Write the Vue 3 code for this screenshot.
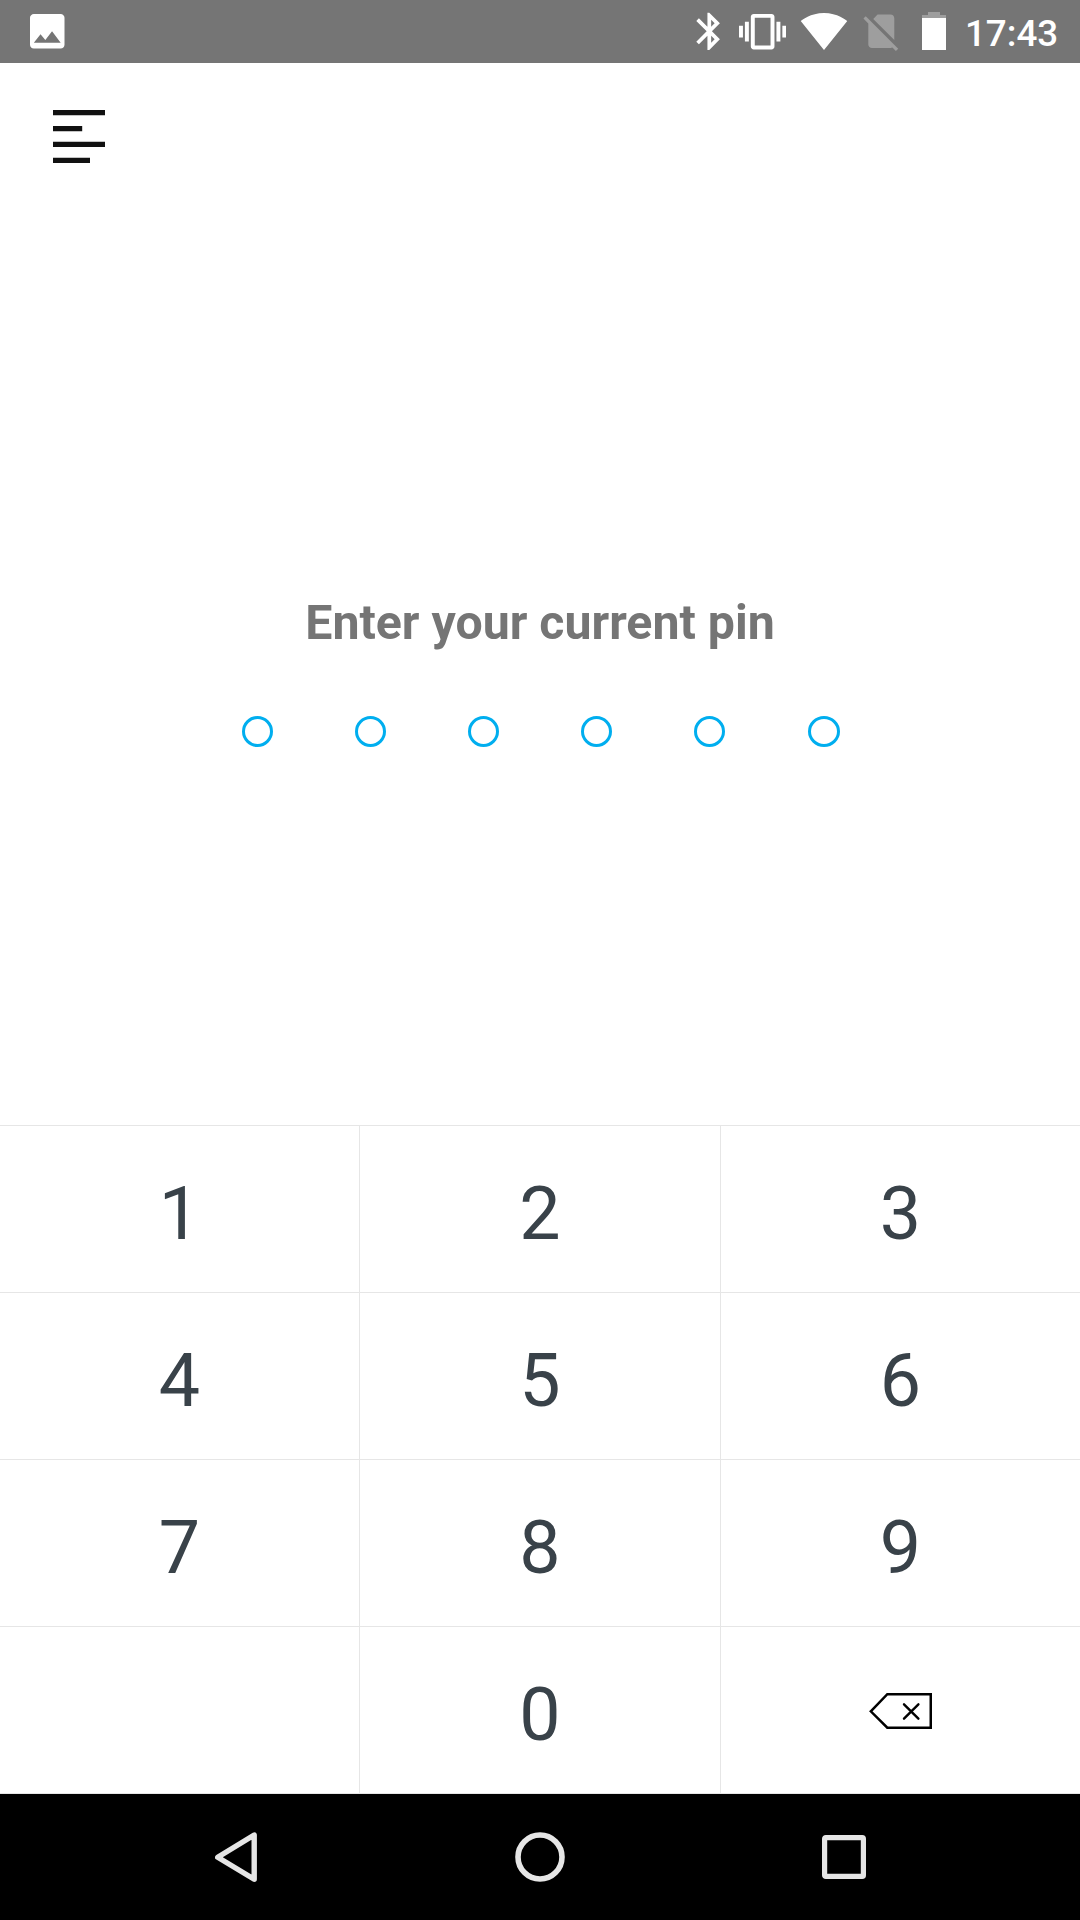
<script setup>
const pinLength = 6
const keys = ['1', '2', '3', '4', '5', '6', '7', '8', '9', '', '0', 'back']
</script>

<template>
  <div class="screen">
    <header class="status">
      <svg class="photo" viewBox="3 3 18 18"><path d="M21 19V5c0-1.100-.9-2-2-2H5c-1.100 0-2 .9-2 2v14c0 1.100.9 2 2 2h14c1.100 0 2-.9 2-2zM8.500 13.500l2.500 3.010L14.500 12l4.500 6H5l3.500-4.500z" /></svg>
      <svg class="bluetooth" viewBox="0 0 24 24"><path d="M17.710 7.710L12 2h-1v7.590L6.410 5 5 6.410 10.590 12 5 17.590 6.410 19 11 14.410V22h1l5.710-5.710-4.300-4.290 4.300-4.290zM13 5.830l1.880 1.880L13 9.590V5.830zm1.880 10.460L13 18.170v-3.760l1.880 1.880z" /></svg>
      <svg class="vibrate" viewBox="0 0 24 24"><path d="M0 15h2V9H0v6zm3 2h2V7H3v10zm19-8v6h2V9h-2zm-3 8h2V7h-2v10zM16.500 3h-9C6.670 3 6 3.670 6 4.500v15c0 .83.67 1.500 1.500 1.500h9c.83 0 1.500-.67 1.500-1.500v-15c0-.83-.67-1.500-1.500-1.500zM16 19H8V5h8v14z" /></svg>
      <svg class="wifi" viewBox="0 0 24 24"><path d="M12.010 21.490L23.640 7c-.45-.34-4.930-4-11.640-4C5.280 3 .81 6.660.36 7l11.630 14.490.01.01.01-.01z" /></svg>
      <svg class="no-sim" viewBox="0 0 24 24"><path d="M18.990 5c0-1.100-.89-2-1.990-2h-7L7.660 5.340 19 16.680 18.990 5zM3.650 3.880L2.380 5.150 5 7.770V19c0 1.100.9 2 2 2h10.010c.35 0 .67-.1.96-.26l1.880 1.880 1.270-1.270L3.650 3.880z" /></svg>
      <svg class="battery" viewBox="0 0 24 38"><path d="M6 0h12v3h6v3H0V3h6z" fill="#9e9e9e" /><path d="M0 6h24v32H0z" /></svg>
      <span class="clock">17:43</span>
    </header>

    <button class="menu" aria-label="Menu">
      <svg width="52" height="53" viewBox="0 0 52 53"><path d="M0 0h52v5.300H0zM0 16h29.200v5.300H0zM0 31.700h52V37H0zM0 47.700h37V53H0z" /></svg>
    </button>

    <main class="prompt">
      <h1>Enter your current pin</h1>
      <div class="dots">
        <i v-for="n in pinLength" :key="n" class="dot"></i>
      </div>
    </main>

    <section class="keypad">
      <div v-for="(key, i) in keys" :key="i" class="key">
        <svg v-if="key === 'back'" class="backspace" width="63" height="36" viewBox="0 0 63 36">
          <path d="M1.800 18.300L18.300 1.250H61.750V34.750H18.300Z" stroke-width="2.5" />
          <path d="M35 11.300l14.400 14.400M49.400 11.300L35 25.700" stroke-width="2.4" stroke-linecap="round" />
        </svg>
        <span v-else>{{ key }}</span>
      </div>
    </section>

    <nav class="navbar">
      <svg width="42" height="50" viewBox="0 0 42 50"><path d="M2.700 25.300L39.200 3V47.300Z" stroke-width="5.400" stroke-linejoin="round" /></svg>
      <svg width="50" height="50" viewBox="0 0 50 50"><circle cx="25" cy="25" r="22" stroke-width="5.600" /></svg>
      <svg width="44" height="44" viewBox="0 0 44 44"><rect x="2.600" y="2.600" width="38.800" height="38.800" rx="1.200" stroke-width="5.200" /></svg>
    </nav>
  </div>
</template>

<style>
body { margin: 0; background: #fff; }
</style>

<style scoped>
.screen {
  width: 1080px;
  height: 1920px;
  display: flex;
  flex-direction: column;
  overflow: hidden;
  background: #fff;
  font-family: Roboto, "Liberation Sans", sans-serif;
}
svg { display: block; flex: none; }
.status {
  height: 63px;
  flex: none;
  display: flex;
  align-items: center;
  box-sizing: border-box;
  padding-bottom: 1px;
  background: #757575;
  color: #fff;
}
.status svg { fill: #fff; }
.photo { width: 34.500px; height: 34.500px; margin: 1px 0 0 30.400px; }
.bluetooth { width: 44.600px; height: 44.600px; margin: 1px 0 0 622.300px; }
.vibrate { width: 47.300px; height: 47.300px; margin: 1.500px 0 0 7px; }
.wifi { width: 48px; height: 48px; margin-left: 14px; }
.status .no-sim { width: 44.600px; height: 44.600px; margin-left: 11.300px; fill: #9e9e9e; }
.battery { width: 24px; height: 38px; margin-left: 17.800px; }
.clock {
  margin-left: 19.200px;
  padding-top: 6px;
  font-size: 36.750px;
  line-height: 44px;
  font-weight: 500;
}
.menu {
  align-self: flex-start;
  margin: 47px 0 0 53px;
  padding: 0;
  border: 0;
  background: none;
}
.menu svg { fill: #111; }
.prompt {
  flex: 1;
  display: flex;
  flex-direction: column;
  align-items: center;
  padding-top: 432px;
}
h1 {
  margin: 0;
  font-size: 48.250px;
  line-height: 56px;
  font-weight: 700;
  color: #757575;
}
.dots { display: flex; gap: 82px; margin-top: 65px; padding-left: 2px; }
.dot {
  width: 31px;
  height: 31px;
  box-sizing: border-box;
  border: 3px solid #00aeef;
  border-radius: 50%;
}
.dot:last-child { width: 32px; margin-left: 1px; }
.keypad {
  flex: none;
  display: grid;
  grid-template-columns: 360px 361px 359px;
  grid-auto-rows: 167px;
  border-top: 1px solid #e6e6e6;
}
.key {
  display: flex;
  align-items: center;
  justify-content: center;
  box-sizing: border-box;
  border-right: 1px solid #e6e6e6;
  border-bottom: 1px solid #e6e6e6;
  font-size: 73.500px;
  line-height: 86px;
  color: #394249;
}
.key:nth-child(3n) { border-right: 0; }
.key span { padding-top: 10px; }
.backspace { fill: none; stroke: #000; margin-top: 2px; }
.navbar {
  flex: none;
  height: 126px;
  display: flex;
  align-items: center;
  justify-content: space-between;
  box-sizing: border-box;
  padding: 0 214px 0 215px;
  background: #000;
}
.navbar svg { fill: none; stroke: #e6e6e6; }
</style>
